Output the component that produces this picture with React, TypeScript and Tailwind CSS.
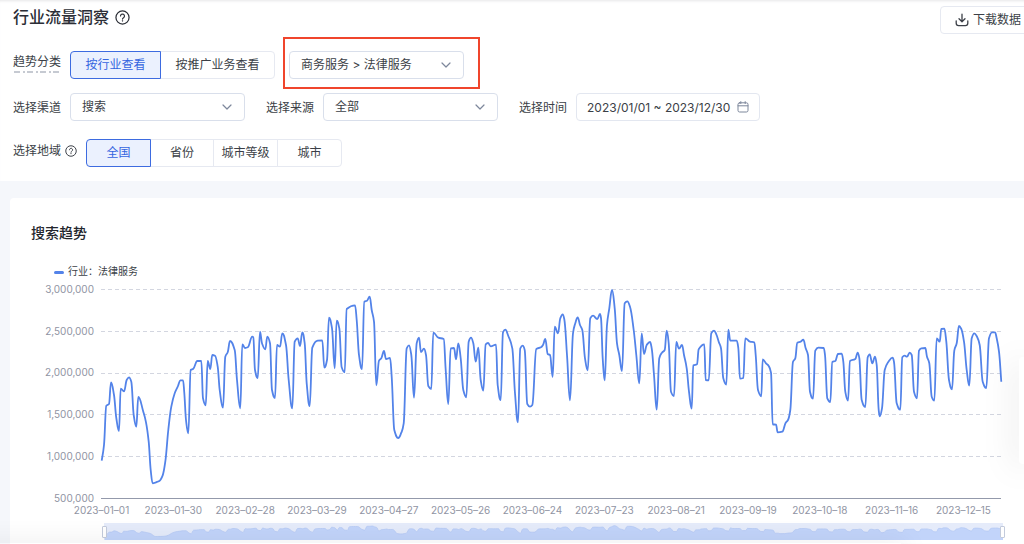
import type { ReactNode } from 'react';
import { useState } from 'react';
import { Calendar, ChevronDown, Download } from 'lucide-react';

// Daily search volume, drawn as [x, y] on a 1024 wide canvas
const TREND: [number, number][] = [
  [101.7, 460.7], [104, 445], [106.3, 405.7], [109, 404], [111, 382.5], [114, 395], [116.3, 418], [119, 431],
  [120.7, 388.7], [124, 391.3], [126.7, 380], [129, 377.3], [131.3, 381.7], [133.7, 415], [136.3, 426.7],
  [138.3, 397], [143.3, 411.7], [146, 422.3], [148.7, 441.7], [150.7, 470], [152.7, 483.3], [156, 482.3],
  [159.3, 481], [162.7, 475.3], [165.3, 461.7], [168.3, 430], [171.3, 406.7], [174.7, 393.3], [178, 386],
  [180.3, 380.3], [183, 380.3], [184.3, 393], [186, 420], [188.3, 433.3], [190.7, 370], [193.3, 368.7],
  [197.3, 361], [201.3, 361], [203, 398.3], [205.7, 405.3], [207.7, 361], [210.3, 369], [212.3, 355],
  [215, 355.7], [217.7, 366.7], [219.7, 390], [223, 407.7], [225.3, 356.7], [227.7, 352.3], [230, 341],
  [234.7, 350], [237, 380], [240.3, 408.3], [242.3, 344.3], [245, 348], [247.7, 347.3], [252.3, 336.7],
  [253.3, 337.3], [255, 370], [257.7, 378], [260, 331.7], [262, 343.3], [265.3, 349.3], [267.3, 336.7],
  [270, 343.3], [272, 390], [275, 398], [277, 345], [280, 346.7], [282.3, 333.3], [286, 345], [288.7, 380],
  [292.3, 408.3], [294.7, 341.7], [297.7, 338.3], [300, 346], [302.3, 332.3], [304.7, 343.3], [306.7, 383.3],
  [309.7, 406], [312.3, 347.7], [317.7, 340.7], [322.3, 340.3], [324.3, 367.7], [327, 360], [329, 317.7],
  [332, 328.3], [334.7, 368.3], [336.7, 320.7], [339.3, 328.3], [341.7, 367.3], [344.7, 372.3], [346.7, 309],
  [355, 305.3], [356.7, 320], [359, 355], [362, 369], [364.3, 301.7], [367, 300.7], [369.7, 296.7],
  [371.7, 310], [374, 321.7], [376.3, 385.3], [379, 360.7], [381.3, 358.3], [384, 351], [386, 359],
  [390, 358], [391.7, 376.7], [394.3, 430], [398.3, 438], [401.3, 432.7], [403.7, 423.3], [406.7, 348.3],
  [409, 345.3], [411.3, 355], [414, 397.7], [416.7, 343.3], [419, 337.7], [421, 352], [424, 348.7],
  [426, 355], [428.3, 386], [431.3, 389], [433.3, 332.7], [438.3, 337.7], [443.7, 339], [445.7, 370],
  [448.3, 404], [450.7, 348.3], [454, 348], [456, 359.3], [458.3, 343.3], [460.7, 358.3], [463.3, 390],
  [466.3, 397.3], [468.7, 341.7], [471, 337.7], [473.3, 343.3], [475.7, 361.7], [478.3, 347.7], [480.7, 380],
  [483.3, 390.7], [485.7, 344.3], [488, 343], [490.7, 346.3], [496, 344.7], [497.7, 385], [500.7, 400],
  [503, 332.3], [505.3, 329.7], [508.3, 336], [512.3, 348.3], [515, 393.3], [518, 422.3], [520.3, 348.3],
  [522.7, 345.7], [524.7, 350], [527.3, 404], [530, 406.7], [532.3, 405], [536.3, 349], [541, 347.3],
  [543, 345], [545.3, 339], [547.7, 354], [550, 355], [552.7, 377], [554.7, 326.7], [558, 333.3],
  [560.3, 318.3], [562.7, 314.3], [564.3, 319.3], [567, 355], [570, 400.3], [573, 333.3], [575.3, 323.3],
  [577.7, 317.3], [580, 325], [582.3, 330], [585, 358.3], [587.7, 370.3], [590.3, 318.3], [593, 315.7],
  [597.3, 319], [600, 314], [601, 318], [602.7, 358.3], [604.7, 380.3], [607, 325], [609.3, 308.3],
  [612, 290], [614.7, 308.3], [617, 343.3], [619.3, 355], [622, 371], [624.7, 303.3], [627.3, 301.3],
  [630, 306.7], [633.7, 330], [636.3, 355], [639.3, 383.3], [641.7, 333.3], [644, 354], [646.7, 345],
  [650, 342], [651.7, 348.3], [654, 375], [656.7, 409.7], [659.3, 358.3], [662, 352.7], [664.7, 350],
  [666.7, 330.7], [668.7, 343.3], [671, 391.7], [674, 396], [676.3, 342], [679, 348.7], [682, 345],
  [684, 355], [686.7, 368.3], [689, 391.7], [691.7, 408.7], [693.3, 365.3], [697, 364.3], [698.7, 349.3],
  [704.3, 344.3], [705.7, 380], [708.7, 380.3], [711.3, 333.3], [714, 330.7], [716.3, 334.3], [718.7, 341.7],
  [721, 348.3], [723.3, 378.3], [726.3, 384.7], [728.3, 329.7], [730.3, 340.7], [736.7, 340.7], [738.3, 348],
  [740, 378.7], [743.3, 378], [745.3, 338.3], [750, 341.7], [754.3, 342.3], [755.7, 355], [758, 390],
  [761.3, 396.3], [762.7, 359.3], [766, 363.3], [768.7, 366], [771, 372.7], [772.7, 424.3], [776, 424.7],
  [777.7, 432.3], [782.3, 431.7], [785.7, 422.7], [788, 420], [790.3, 410], [793, 361.7], [795.3, 358.3],
  [797.3, 342.7], [800.7, 341.7], [803.3, 339.7], [805.7, 348.3], [808, 355], [810, 391.7], [813, 398.7],
  [815.3, 350.7], [818.3, 347.7], [823.7, 348], [825, 355], [827.3, 398.3], [830.3, 402], [832.3, 362],
  [835.3, 361], [838, 354], [841.7, 353.7], [843.3, 361.7], [845.3, 391.7], [848, 400.7], [850, 361],
  [855.3, 359], [857.7, 352.7], [859.3, 358], [861.7, 400], [865.3, 407], [867.7, 357.3], [869.7, 354.3],
  [872.3, 363.3], [875, 356.7], [876.7, 365], [878.7, 410], [879.7, 416.3], [882, 408.3], [884.7, 370],
  [888.3, 362], [892.7, 357.7], [894, 362], [896.7, 403.3], [900.3, 409.7], [902.3, 357.3], [904.7, 355.7],
  [907, 356.7], [909.7, 352.7], [911.7, 355], [914, 391.7], [917, 398.3], [919, 350.7], [921.3, 348.3],
  [925.3, 348], [927, 356.7], [929.3, 363.3], [931.7, 396.7], [934.3, 400.7], [936.7, 338.3], [939.7, 341.7],
  [941.3, 329], [944.3, 328.7], [946.3, 341.7], [949, 380], [952, 389.3], [954.3, 350.7], [956.7, 343.3],
  [959, 326], [961.3, 329], [964, 341.7], [966.7, 370], [969.3, 385.7], [971.7, 338.3], [974.3, 333.3],
  [977, 336.7], [979.7, 345], [982.7, 381.7], [986.3, 388], [989, 338.3], [992, 332.3], [995, 332.3],
  [996.7, 338.3], [999, 351.7], [1001.3, 381.7],
];

const Y_TICKS = ['3,000,000', '2,500,000', '2,000,000', '1,500,000', '1,000,000', '500,000'];

const X_TICKS = [
  '2023–01–01', '2023–01–30', '2023–02–28', '2023–03–29', '2023–04–27', '2023–05–26', '2023–06–24',
  '2023–07–23', '2023–08–21', '2023–09–19', '2023–10–18', '2023–11–16', '2023–12–15',
];

// monotone cubic, so peaks never overshoot
function smoothPath(points: [number, number][]) {
  const n = points.length;
  const slope = points.slice(1).map(([x, y], i) => (y - points[i][1]) / (x - points[i][0]));
  const tangent = points.map((_, i) => {
    if (i === 0) return slope[0];
    if (i === n - 1) return slope[n - 2];
    const a = slope[i - 1];
    const b = slope[i];
    return a * b <= 0 ? 0 : (2 * a * b) / (a + b);
  });

  let d = `M${points[0][0]},${points[0][1]}`;
  for (let i = 1; i < n; i++) {
    const [x0, y0] = points[i - 1];
    const [x1, y1] = points[i];
    const h = (x1 - x0) / 2.4;
    d += `C${(x0 + h).toFixed(2)},${(y0 + h * tangent[i - 1]).toFixed(2)} ${(x1 - h).toFixed(2)},${(y1 - h * tangent[i]).toFixed(2)} ${x1},${y1}`;
  }
  return d;
}

const linePath = smoothPath(TREND);
const miniPath = smoothPath(TREND.map(([x, y]) => [x, 3 + (y - 296) * 0.056]));

const HelpIcon = ({ className }: { className: string }) => (
  <svg className={className} viewBox="0 0 16 16" fill="none" stroke="currentColor" strokeWidth="1.3" aria-hidden="true">
    <circle cx="8" cy="8" r="7" />
    <path d="M5.9 6.4a2.1 2.1 0 1 1 3.2 1.8c-.7.45-1.1.8-1.1 1.5" strokeLinecap="round" />
    <circle cx="8" cy="11.6" r=".4" fill="currentColor" strokeWidth=".8" />
  </svg>
);

const DownloadIcon = () => (
  <svg className="h-[14px] w-[14px] shrink-0" viewBox="0 0 14 14" fill="none" stroke="currentColor" strokeWidth="1.3" strokeLinecap="round" strokeLinejoin="round" aria-hidden="true">
    <path d="M7 1.2v7.3M4 5.8l3 3 3-3M1.2 7.8v2.4a2.4 2.4 0 0 0 2.4 2.4h6.8a2.4 2.4 0 0 0 2.4-2.4V7.8" />
  </svg>
);

const CalendarIcon = () => (
  <svg className="pointer-events-none absolute right-[11px] top-2 h-3 w-3 text-[#7d879b]" viewBox="0 0 12 12" fill="none" stroke="currentColor" strokeLinecap="round" aria-hidden="true">
    <rect x="1" y="1.8" width="10" height="9.2" rx="1.6" />
    <path d="M1 4.8h10M3.8.6v2M8.2.6v2" />
  </svg>
);

const Segmented = ({ name, options, widths }: { name: string; options: string[]; widths: string[] }) => {
  const [active, setActive] = useState(0);
  return (
    <div role="group" aria-label={name} className="flex h-7">
      {options.map((option, i) => (
        <button
          key={option}
          type="button"
          aria-pressed={i === active}
          onClick={() => setActive(i)}
          className={`${widths[i]} border text-center first:rounded-l last:rounded-r not-first:-ml-px ${
            i === active
              ? 'relative border-[#3d6be0] bg-[#ebf1fe] text-[#3465e0]'
              : 'border-[#e6e9f1] bg-white'
          }`}
        >
          {option}
        </button>
      ))}
    </div>
  );
};

const Dropdown = ({ id, label, children }: { id: string; label?: string; children: ReactNode }) => (
  <div className="relative">
    <select
      id={id}
      aria-label={label}
      className="block h-7 w-[175px] appearance-none rounded border border-[#d9dfeb] bg-white pl-[11px] pr-8"
    >
      {children}
    </select>
    <ChevronDown
      className="pointer-events-none absolute right-3 top-2 h-3 w-3 text-[#7d879b]"
      viewBox="3 3 18 18"
      strokeWidth={1.8}
    />
  </div>
);

const App = () => {
  return (
    <div className="flex min-h-screen flex-col overflow-hidden bg-[#f5f7fb] font-['Inter','Noto_Sans_CJK_SC',sans-serif] text-xs text-[#3b3f47]">
      {/* Filters */}
      <header className="bg-white pb-[14px] pl-[13px] shadow-[inset_0_3px_3px_-2px_#e6e6e8]">
        <div className="flex items-start justify-between pt-[6px]">
          <h1 className="flex h-[22px] items-center gap-[6px] text-base font-medium text-[#2b2e36]">
            行业流量洞察
            <HelpIcon className="h-[15px] w-[15px]" />
          </h1>
          <button
            type="button"
            className="-mr-2 flex h-7 w-[92px] shrink-0 items-center gap-1 rounded border border-[#e6e9f1] bg-white pl-[14px]"
          >
            <DownloadIcon />
            <span className="shrink-0">下载数据</span>
          </button>
        </div>

        <div className="mt-[17px] flex h-7 items-center">
          <div className="mb-1 mr-[9px] flex flex-col">
            <span className="leading-[18px]">趋势分类</span>
            <svg className="h-[2px] w-12" viewBox="0 0 48 2" aria-hidden="true">
              <path d="M1 1h47" stroke="#8d95a5" strokeDasharray="6 3 2 2" />
            </svg>
          </div>
          <Segmented name="趋势分类" options={['按行业查看', '按推广业务查看']} widths={['w-[91px]', 'w-[115px]']} />
          <div className="relative ml-[14px]">
            <Dropdown id="industry" label="行业">
              <option>商务服务 &gt; 法律服务</option>
            </Dropdown>
            <span className="pointer-events-none absolute -bottom-[10px] -left-[6px] -right-4 -top-[14px] border-2 border-[#f0452c]" />
          </div>
        </div>

        <div className="mt-[14px] flex h-7 items-center">
          <label htmlFor="channel" className="mr-[9px] pt-[2px]">选择渠道</label>
          <Dropdown id="channel">
            <option>搜索</option>
          </Dropdown>
          <label htmlFor="source" className="ml-[21px] mr-[9px] pt-[2px]">选择来源</label>
          <Dropdown id="source">
            <option>全部</option>
          </Dropdown>
          <label htmlFor="period" className="ml-[21px] mr-[9px] pt-[2px]">选择时间</label>
          <div className="relative">
            <input
              id="period"
              type="text"
              defaultValue="2023/01/01 ~ 2023/12/30"
              className="block h-7 w-[184px] rounded border border-[#e3e7f0] bg-white pl-[10px] pr-6"
            />
            <CalendarIcon />
          </div>
        </div>

        <div className="mt-[18px] flex h-7 items-center">
          <span className="mb-1 mr-1">选择地域</span>
          <HelpIcon className="mb-1 mr-[9px] h-3 w-3" />
          <Segmented
            name="选择地域"
            options={['全国', '省份', '城市等级', '城市']}
            widths={['w-[65px]', 'w-16', 'w-[65px]', 'w-[65px]']}
          />
        </div>
      </header>

      {/* Search trend */}
      <main className="ml-[10px] mt-[17px] flex-1 rounded-tl bg-white pr-[23px] pt-6">
        <h2 className="ml-[21px] text-sm font-medium leading-[22px] text-[#23262d]">搜索趋势</h2>

        <div className="ml-11 mt-5 flex h-4 items-center gap-1 text-[10px]">
          <span className="h-[3px] w-[10px] rounded-sm bg-[#5383e9]" />
          行业：法律服务
        </div>

        <div className="mt-[9px] flex text-[10px] text-[#9094a3]">
          <ul className="mr-[7px] flex h-[210px] w-[84px] shrink-0 flex-col justify-between text-right">
            {Y_TICKS.map((tick) => (
              <li key={tick} className="flex h-px items-center justify-end">{tick}</li>
            ))}
          </ul>

          <div className="min-w-0 flex-1">
            <svg
              className="block h-[210px] w-full overflow-visible"
              viewBox="101 289 900 210"
              preserveAspectRatio="none"
              fill="none"
              role="img"
              aria-label="搜索趋势"
            >
              {[289.5, 331.5, 373.5, 414.5, 456.5].map((y) => (
                <path key={y} d={`M101 ${y}H1001`} stroke="#d3d6e0" strokeDasharray="4 3" />
              ))}
              <path d="M101 498.5H1001" stroke="#9399ab" strokeWidth="1.2" />
              <path d={linePath} stroke="#5383e9" strokeWidth="1.8" strokeLinejoin="round" vectorEffect="non-scaling-stroke" />
            </svg>

            <ul className="mr-[37px] mt-1 flex h-4 justify-between">
              {X_TICKS.map((tick) => (
                <li key={tick} className="flex w-px items-center justify-center whitespace-nowrap">{tick}</li>
              ))}
            </ul>

            {/* Range brush */}
            <div className="relative ml-[3px] mr-[-2px] mt-1 h-[17px] bg-[#e5ebfa]">
              <svg className="block h-full w-full" viewBox="101 0 900 17" preserveAspectRatio="none" aria-hidden="true">
                <path d={`${miniPath}V17H101.7Z`} fill="#c2d4fa" />
                <path d={miniPath} fill="none" stroke="#b2c7f3" strokeWidth=".7" />
              </svg>
              {['开始日期', '结束日期'].map((name, i) => (
                <input
                  key={name}
                  type="range"
                  aria-label={name}
                  min={0}
                  max={363}
                  defaultValue={i * 363}
                  className="pointer-events-none absolute -left-[2px] top-0 h-full w-[calc(100%+4px)] appearance-none bg-transparent [&::-webkit-slider-thumb]:pointer-events-auto [&::-webkit-slider-thumb]:h-3 [&::-webkit-slider-thumb]:w-[5px] [&::-webkit-slider-thumb]:appearance-none [&::-webkit-slider-thumb]:rounded-[1px] [&::-webkit-slider-thumb]:border [&::-webkit-slider-thumb]:border-[#c3cbdc] [&::-webkit-slider-thumb]:bg-white"
                />
              ))}
            </div>
          </div>
        </div>
      </main>

      {/* Floating side panel and page bottom shade */}
      <aside className="fixed right-0 top-[357px] h-[107px] w-[5px] rounded-l bg-white shadow-[0_4px_32px_rgba(0,0,0,0.25)]" />
      <div className="pointer-events-none fixed -left-10 bottom-0 right-[12%] h-px shadow-[0_8px_28px_4px_rgba(0,0,0,0.16)]" />
    </div>
  );
};

export default App;
